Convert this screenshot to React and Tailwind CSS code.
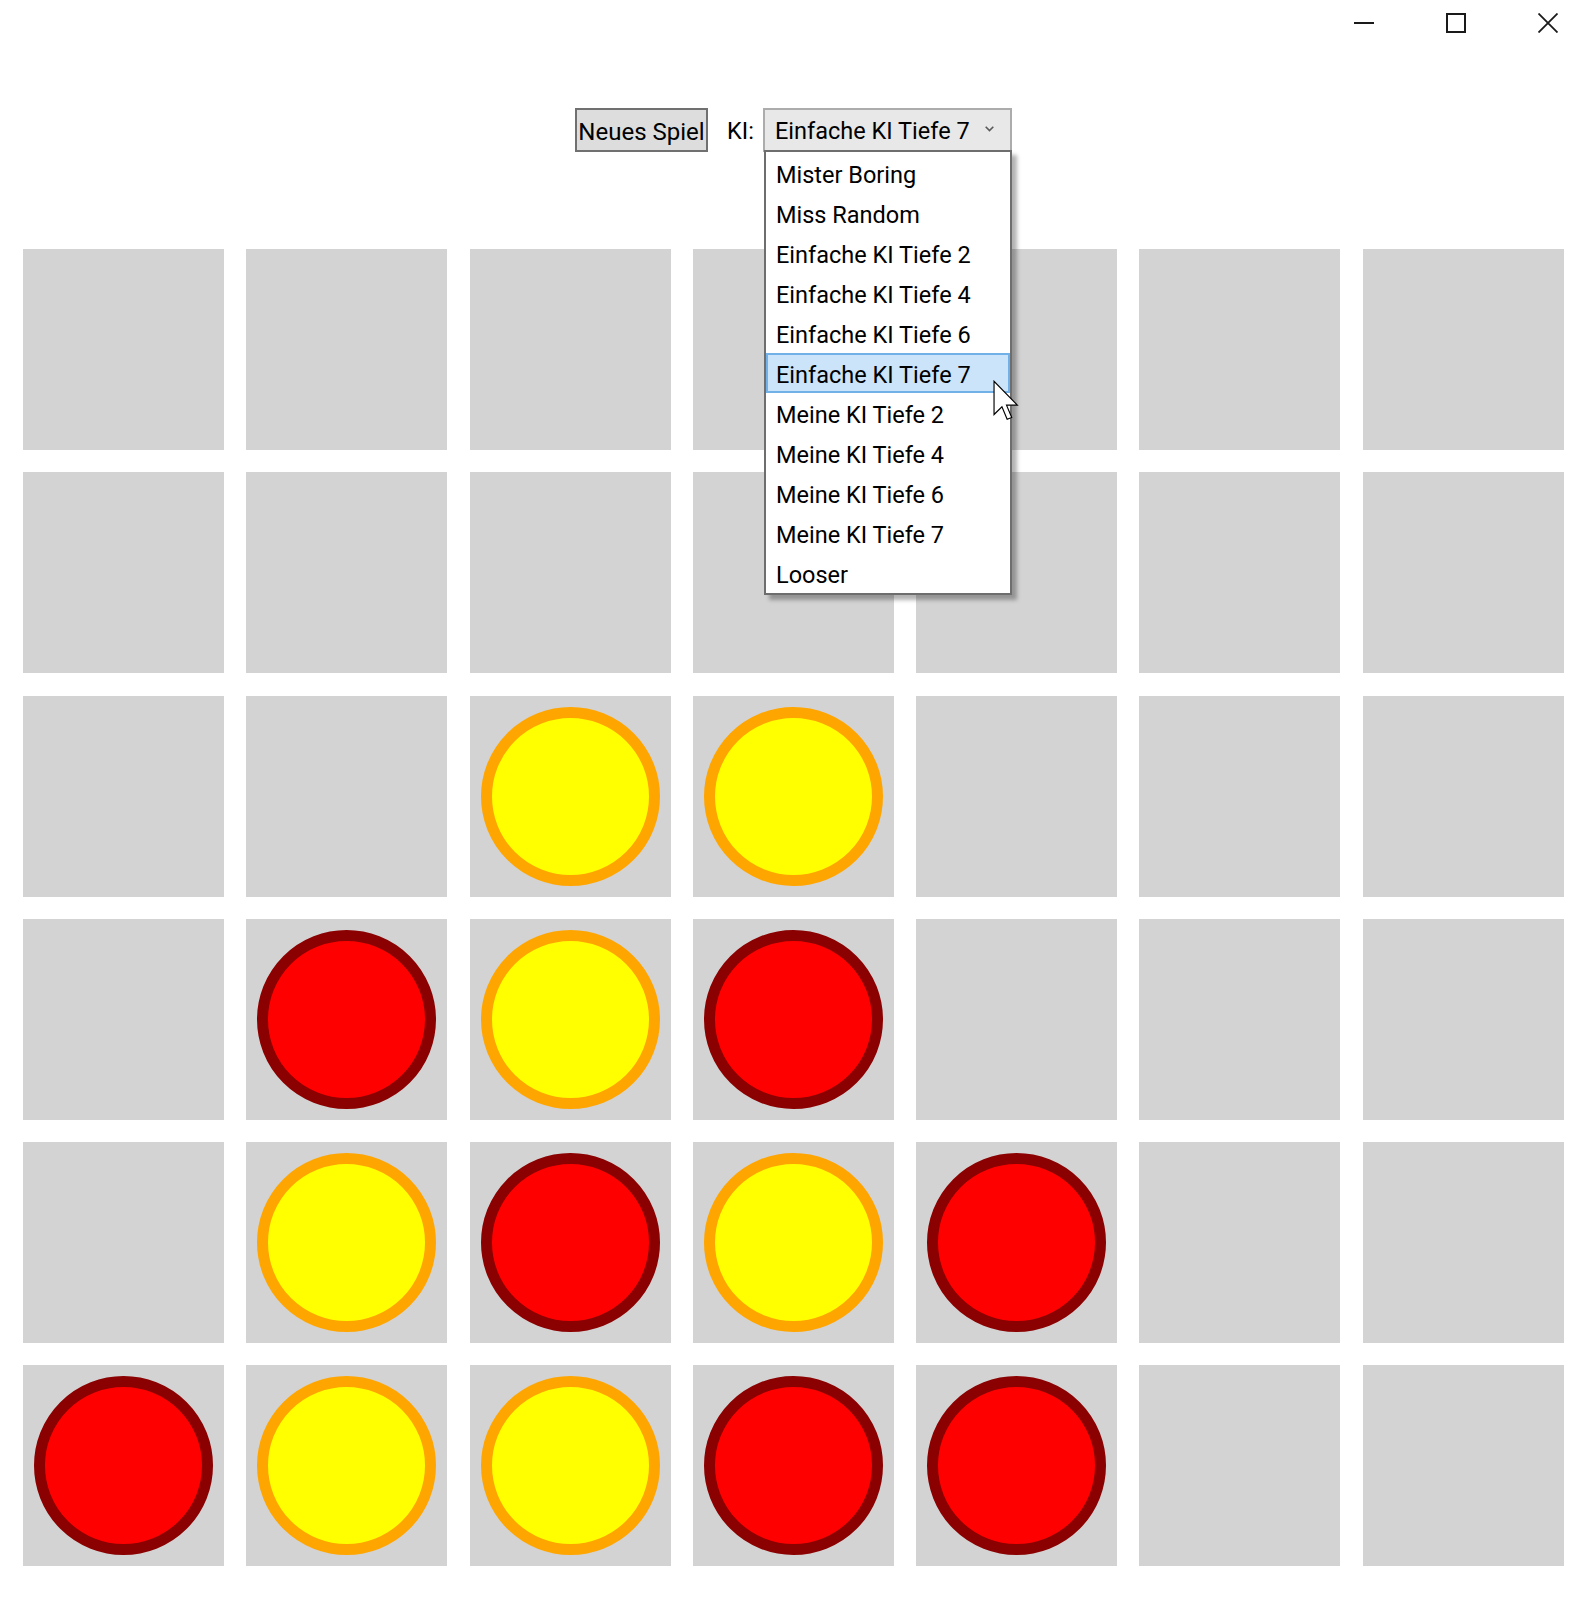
import React from 'react';

const board = [
  ['', '', '', '', '', '', ''],
  ['', '', '', '', '', '', ''],
  ['', '', 'y', 'y', '', '', ''],
  ['', 'r', 'y', 'r', '', '', ''],
  ['', 'y', 'r', 'y', 'r', '', ''],
  ['r', 'y', 'y', 'r', 'r', '', ''],
];

const options = [
  'Mister Boring',
  'Miss Random',
  'Einfache KI Tiefe 2',
  'Einfache KI Tiefe 4',
  'Einfache KI Tiefe 6',
  'Einfache KI Tiefe 7',
  'Meine KI Tiefe 2',
  'Meine KI Tiefe 4',
  'Meine KI Tiefe 6',
  'Meine KI Tiefe 7',
  'Looser',
];

const font = { fontFamily: 'Roboto, "Noto Sans", sans-serif' };

// one board slot
const Cell = ({ piece }) => (
  <div className="w-[201px] h-[201px] bg-[#d3d3d3] flex items-center justify-center">
    {piece === 'r' && (
      <div className="w-[179px] h-[179px] rounded-full bg-[#ff0000] border-[11px] border-[#8b0000]" />
    )}
    {piece === 'y' && (
      <div className="w-[179px] h-[179px] rounded-full bg-[#ffff00] border-[11px] border-[#ffa500]" />
    )}
  </div>
);

const TitleBar = () => (
  <div className="h-[46px] flex justify-end -mr-[4px]">
    <div className="w-[92px] h-[46px] flex items-center justify-center">
      <div className="w-[20px] h-[2px] bg-[#1a1a1a]" />
    </div>
    <div className="w-[92px] h-[46px] flex items-center justify-center">
      <div className="w-[20px] h-[20px] border-2 border-[#1a1a1a]" />
    </div>
    <div className="w-[92px] h-[46px] flex items-center justify-center">
      <svg width="20" height="20" viewBox="0 0 20 20">
        <path d="M0.5 0.5 L19.5 19.5 M19.5 0.5 L0.5 19.5" stroke="#1a1a1a" strokeWidth="1.8" fill="none" />
      </svg>
    </div>
  </div>
);

const Cursor = () => (
  <svg className="absolute left-[993px] top-[380px]" width="26" height="42" viewBox="0 0 12.5 20">
    <path
      d="M0.5 0.5 L0.5 16.5 L4.3 12.8 L6.8 18.8 L9 17.9 L6.5 12 L11.7 12 Z"
      fill="#ffffff"
      stroke="#000000"
      strokeWidth="0.55"
      strokeLinejoin="miter"
    />
  </svg>
);

export default function App() {
  return (
    <div className="w-[1590px] h-[1602px] bg-white relative overflow-hidden text-black" style={font}>
      <TitleBar />

      {/* toolbar */}
      <div className="mt-[62px] flex justify-center pr-[3px]">
        <button className="w-[133px] h-[44px] bg-[#dddddd] border-2 border-[#707070] text-[24px] leading-none whitespace-nowrap flex items-center justify-center pt-[3px]">
          Neues Spiel
        </button>
        <div className="w-[55px] h-[44px] pl-[19px] pt-[3px] flex items-center text-[23.5px]">KI:</div>
        <div className="w-[249px] h-[44px] bg-[#e8e8e8] border-2 border-[#acacac] flex items-center pl-[10px] pr-[16px] pt-[3px] text-[23.5px] whitespace-nowrap">
          <span className="flex-1">Einfache KI Tiefe 7</span>
          <svg width="9" height="6" viewBox="0 0 9 6" className="-mt-[5px]">
            <path d="M0.7 0.7 L4.5 4.6 L8.3 0.7" stroke="#5a5a5a" strokeWidth="1.6" fill="none" />
          </svg>
        </div>
      </div>

      {/* board */}
      <div className="mt-[97px] pl-[23px] grid grid-cols-[repeat(7,201px)] auto-rows-[201px] gap-[22.25px]">
        {board.map((row, r) => row.map((p, c) => <Cell key={r + '-' + c} piece={p} />))}
      </div>

      {/* open combobox list */}
      <div className="absolute left-[764px] top-[150px] w-[248px] bg-white border-2 border-[#6e6e6e] pt-[1px] shadow-[5px_5px_4px_rgba(0,0,0,0.3)]">
        {options.map((o) =>
          o === 'Einfache KI Tiefe 7' ? (
            <div key={o} className="h-[40px] flex items-center pl-[8px] pt-[5px] text-[23.5px] whitespace-nowrap bg-[#cce4f9] border-2 border-[#72b0e8]">
              {o}
            </div>
          ) : (
            <div key={o} className="h-[40px] flex items-center pl-[10px] pt-[5px] text-[23.5px] whitespace-nowrap">
              {o}
            </div>
          )
        )}
      </div>

      <Cursor />
    </div>
  );
}
